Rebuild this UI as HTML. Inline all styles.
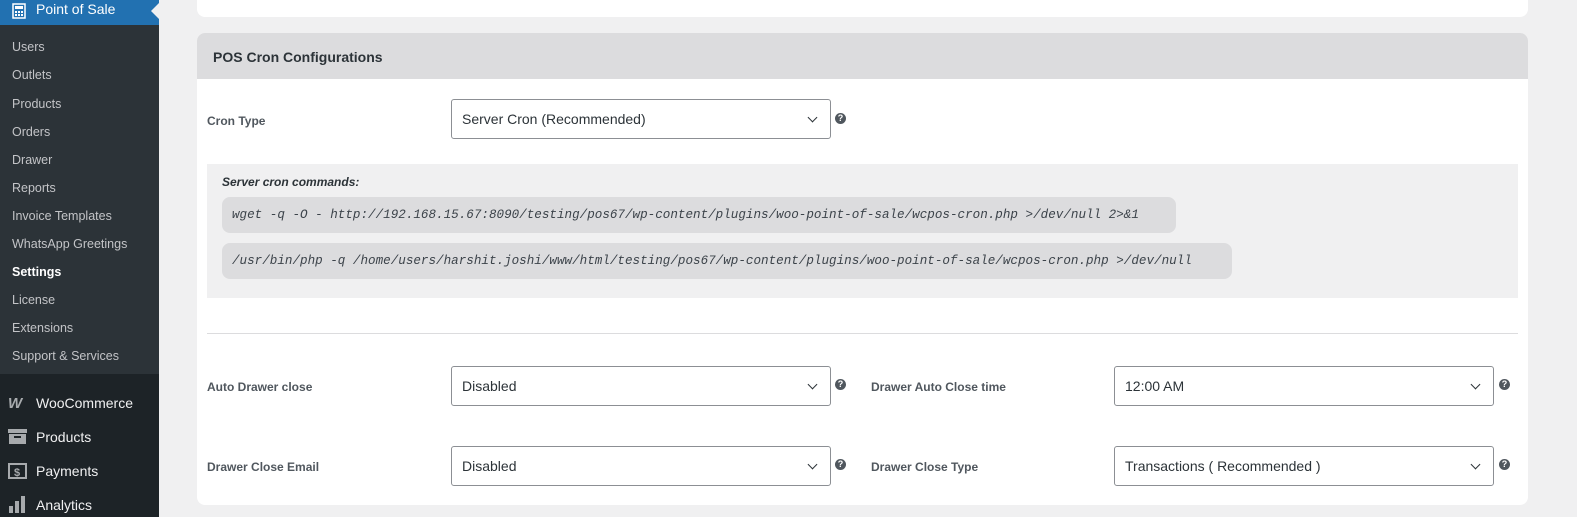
<!DOCTYPE html>
<html><head><style>
*{box-sizing:border-box;margin:0;padding:0}
body{width:1577px;height:517px;overflow:hidden;background:#f0f0f1;font-family:"Liberation Sans",sans-serif;position:relative}
.sb{position:absolute;left:0;top:0;width:159px;height:517px;background:#1d2327}
.sub{position:absolute;left:0;top:25px;width:159px;height:349px;background:#2c3338}
.top{position:absolute;left:0;top:0;width:159px;height:25px;background:#2271b1;color:#fff;font-size:14px;line-height:19px;padding-left:36px}
.arrow{position:absolute;left:151px;top:3px;width:0;height:0;border-top:8px solid transparent;border-bottom:8px solid transparent;border-right:8px solid #f0f0f1}
.si{position:absolute;left:12px;font-size:12.5px;color:#c3c4c7}
.mi{position:absolute;left:36px;font-size:14px;color:#f0f0f1}
.card{position:absolute;background:#fff;border-radius:8px}
.hd{position:absolute;left:197px;top:33px;width:1331px;height:46px;background:#dcdcde;border-radius:8px 8px 0 0;font-weight:bold;font-size:14px;color:#2c3338;padding:16px 0 0 16px}
.lbl{position:absolute;font-size:12px;font-weight:bold;color:#50575e}
.sel{position:absolute;width:380px;height:40px;border:1px solid #8c8f94;border-radius:3px;background:#fff;font-size:14px;color:#2c3338;padding:11px 0 0 10px}
.sel:after{content:"";position:absolute;right:14px;top:14px;width:6px;height:6px;border-right:1.5px solid #2c3338;border-bottom:1.5px solid #2c3338;transform:rotate(45deg)}
.q{position:absolute;width:11px;height:11px;border-radius:50%;background:#50575e;color:#fff;font-size:9px;font-weight:bold;text-align:center;line-height:11px}
.code{position:absolute;left:222px;height:36px;background:#dcdcde;border-radius:8px;font-family:"Liberation Mono",monospace;font-style:italic;font-size:12.6px;color:#3c434a;padding:11px 0 0 10px;white-space:nowrap}
</style></head><body>
<div class="sb">
<div class="sub"></div>
<div class="top">Point of Sale</div>
<svg style="position:absolute;left:12px;top:3px" width="14" height="16" viewBox="0 0 14 16"><rect x="1" y="1" width="12" height="14" fill="none" stroke="#fff" stroke-width="1.5"/><rect x="3" y="3" width="8" height="3" fill="#fff"/><g fill="#fff"><rect x="3" y="8" width="2" height="2"/><rect x="6" y="8" width="2" height="2"/><rect x="9" y="8" width="2" height="2"/><rect x="3" y="11" width="2" height="2"/><rect x="6" y="11" width="2" height="2"/><rect x="9" y="11" width="2" height="2"/></g></svg>
<div class="arrow"></div>
<div class="si" style="top:40px">Users</div>
<div class="si" style="top:68px">Outlets</div>
<div class="si" style="top:97px">Products</div>
<div class="si" style="top:125px">Orders</div>
<div class="si" style="top:153px">Drawer</div>
<div class="si" style="top:181px">Reports</div>
<div class="si" style="top:209px">Invoice Templates</div>
<div class="si" style="top:237px">WhatsApp Greetings</div>
<div class="si" style="top:265px;color:#fff;font-weight:bold">Settings</div>
<div class="si" style="top:293px">License</div>
<div class="si" style="top:321px">Extensions</div>
<div class="si" style="top:349px">Support &amp; Services</div>
<div style="position:absolute;left:8px;top:395px;color:#a7aaad;font-weight:bold;font-style:italic;font-size:15px">W</div>
<div class="mi" style="top:395px">WooCommerce</div>
<svg style="position:absolute;left:8px;top:429px" width="19" height="15"><rect x="0" y="0" width="19" height="4" fill="#a7aaad"/><rect x="1" y="5" width="17" height="10" fill="#a7aaad"/><rect x="6" y="7" width="7" height="2" fill="#1d2327"/></svg>
<div class="mi" style="top:429px">Products</div>
<svg style="position:absolute;left:8px;top:463px" width="19" height="16"><rect x="1" y="1" width="17" height="14" fill="none" stroke="#a7aaad" stroke-width="2"/><text x="6" y="13" font-size="11" font-weight="bold" fill="#a7aaad" font-family="Liberation Sans">$</text></svg>
<div class="mi" style="top:463px">Payments</div>
<svg style="position:absolute;left:8px;top:495px" width="19" height="18"><rect x="1" y="11" width="4" height="7" fill="#a7aaad"/><rect x="7" y="6" width="4" height="12" fill="#a7aaad"/><rect x="13" y="1" width="4" height="17" fill="#a7aaad"/></svg>
<div class="mi" style="top:497px">Analytics</div>
</div>

<div class="card" style="left:197px;top:-10px;width:1331px;height:27px"></div>
<div class="card" style="left:197px;top:33px;width:1331px;height:472px"></div>
<div class="hd">POS Cron Configurations</div>

<div class="lbl" style="left:207px;top:114px">Cron Type</div>
<div class="sel" style="left:451px;top:99px">Server Cron (Recommended)</div>
<div class="q" style="left:835px;top:113px">?</div>

<div style="position:absolute;left:207px;top:164px;width:1311px;height:134px;background:#f0f0f1"></div>
<div style="position:absolute;left:222px;top:175px;font-size:12px;font-weight:bold;font-style:italic;color:#2c3338">Server cron commands:</div>
<div class="code" style="top:197px;width:954px">wget -q -O - http://192.168.15.67:8090/testing/pos67/wp-content/plugins/woo-point-of-sale/wcpos-cron.php &gt;/dev/null 2&gt;&amp;1</div>
<div class="code" style="top:243px;width:1010px">/usr/bin/php -q /home/users/harshit.joshi/www/html/testing/pos67/wp-content/plugins/woo-point-of-sale/wcpos-cron.php &gt;/dev/null</div>

<div style="position:absolute;left:207px;top:333px;width:1311px;height:1px;background:#dcdcde"></div>

<div class="lbl" style="left:207px;top:380px">Auto Drawer close</div>
<div class="sel" style="left:451px;top:366px">Disabled</div>
<div class="q" style="left:835px;top:379px">?</div>
<div class="lbl" style="left:871px;top:380px">Drawer Auto Close time</div>
<div class="sel" style="left:1114px;top:366px">12:00 AM</div>
<div class="q" style="left:1499px;top:379px">?</div>

<div class="lbl" style="left:207px;top:460px">Drawer Close Email</div>
<div class="sel" style="left:451px;top:446px">Disabled</div>
<div class="q" style="left:835px;top:459px">?</div>
<div class="lbl" style="left:871px;top:460px">Drawer Close Type</div>
<div class="sel" style="left:1114px;top:446px">Transactions ( Recommended )</div>
<div class="q" style="left:1499px;top:459px">?</div>
</body></html>
